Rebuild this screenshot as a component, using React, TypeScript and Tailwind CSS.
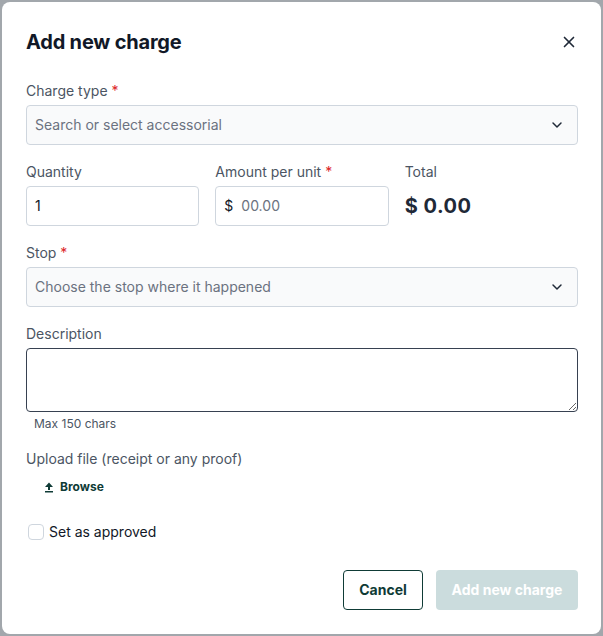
import React from "react";
import { X, ChevronDown } from "lucide-react";

function Label({ text, required }: { text: string; required?: boolean }) {
    return (
        <div className="text-sm leading-5 text-[#4b5563] mb-1">
            {text}
            {required && <span className="text-[#dc2626]"> *</span>}
        </div>
    );
}

function SelectBox({ placeholder }: { placeholder: string }) {
    return (
        <div className="flex h-10 items-center justify-between rounded border border-[#cfd6de] bg-[#f9fafb] pl-2 pr-3">
            <span className="text-sm text-[#6b7280]">{placeholder}</span>
            <ChevronDown size={16} strokeWidth={2.2} className="text-[#1f2937]" />
        </div>
    );
}

export default function App() {
    return (
        <div
            className="h-[636px] w-[603px] bg-[#a2a7ac] p-[2px]"
            style={{ fontFamily: "Inter, 'Noto Sans', sans-serif" }}
        >
            <div className="flex h-full w-full flex-col rounded-lg bg-white pl-6 pr-[23px] pt-6">
                <div className="flex h-8 items-center justify-between">
                    <h2 className="text-[20px] font-bold tracking-[-0.2px] text-[#111827]">Add new charge</h2>
                    <X size={18} strokeWidth={2.2} className="text-[#1f2937]" />
                </div>

                <div className="mt-[23px]">
                    <Label text="Charge type" required />
                    <SelectBox placeholder="Search or select accessorial" />
                </div>

                <div className="mt-[17px] grid grid-cols-3 gap-4">
                    <div>
                        <Label text="Quantity" />
                        <div className="flex h-10 items-center rounded border border-[#cfd6de] bg-white px-2 text-sm text-[#111827]">
                            1
                        </div>
                    </div>
                    <div>
                        <Label text="Amount per unit" required />
                        <div className="flex h-10 items-center gap-2 rounded border border-[#cfd6de] bg-white px-2 text-sm">
                            <span className="text-[#111827]">$</span>
                            <span className="text-[#6b7280]">00.00</span>
                        </div>
                    </div>
                    <div>
                        <Label text="Total" />
                        <div className="flex h-10 items-center text-[20px] font-bold tracking-[0.5px] text-[#1f2937]">
                            $ 0.00
                        </div>
                    </div>
                </div>

                <div className="mt-[17px]">
                    <Label text="Stop" required />
                    <SelectBox placeholder="Choose the stop where it happened" />
                </div>

                <div className="mt-[17px]">
                    <Label text="Description" />
                    <textarea className="block h-16 w-full resize-y rounded border border-[#374151] bg-white px-2 py-1 text-sm outline-none" />
                    <div className="mt-1 pl-2 text-xs leading-4 text-[#4b5563]">Max 150 chars</div>
                </div>

                <div className="mt-[17px]">
                    <div className="text-sm leading-5 text-[#4b5563]">Upload file (receipt or any proof)</div>
                    <button className="mt-[10px] flex items-center gap-[6px] pl-[18px] text-xs font-bold leading-4 text-[#0f3b36]">
                        <svg width="10" height="11" viewBox="0 0 10 11" fill="currentColor">
                            <path d="M5 0.5 L9 5 H6 V8 H4 V5 H1 Z" />
                            <rect x="1" y="9" width="8" height="1.5" />
                        </svg>
                        Browse
                    </button>
                </div>

                <label className="mt-[27px] flex items-center gap-[5px] pl-[2px]">
                    <span className="block h-4 w-4 rounded-[4px] border border-[#cfd6de] bg-white" />
                    <span className="text-sm leading-5 text-[#111827]">Set as approved</span>
                </label>

                <div className="mt-7 flex justify-end gap-[13px]">
                    <button className="h-10 w-[80px] rounded border border-[#0f3b36] text-sm font-bold text-[#0f3b36]">
                        Cancel
                    </button>
                    <button className="h-10 w-[142px] rounded bg-[#cbdcdd] text-sm font-bold text-white">
                        Add new charge
                    </button>
                </div>
            </div>
        </div>
    );
}
